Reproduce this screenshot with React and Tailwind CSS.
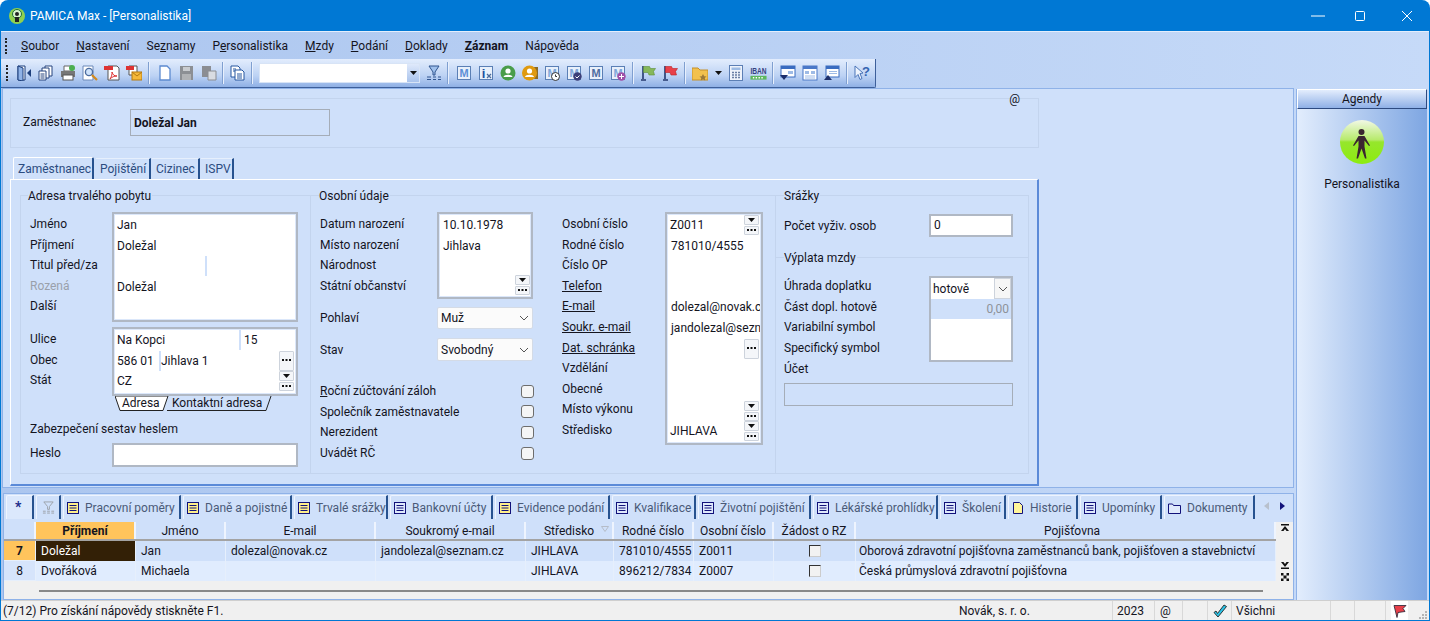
import React from "react";

const S = ({ children }) => <svg viewBox="0 0 16 16" className="w-4 h-4 shrink-0">{children}</svg>;
const Slot = ({ children }) => <div className="w-[22px] h-4 flex justify-center shrink-0">{children}</div>;
const Sep = ({ w = "w-[8px]" }) => <div className={`${w} h-[22px] flex justify-center shrink-0`}><div className="w-[2px] h-full bg-[#e8f0fd] border-l border-[#7f9fd0]" /></div>;

const M = ({ extra, tone = "#5b8fd6" }) => (
  <S>
    <rect x="1.5" y="1.5" width="13" height="13" fill="#e8f0fb" stroke="#5a7fb5" />
    <text x="8" y="12.2" textAnchor="middle" fontSize="11" fontWeight="700" fontFamily="Liberation Sans, sans-serif" fill={tone}>M</text>
    {extra}
  </S>
);

const icons = {
  door: <S><path d="M2 1h7v14H2z" fill="#fff" stroke="#1d3f7c" /><path d="M2 1l5 2v13l-5-1z" fill="#8fb2e6" stroke="#1d3f7c" /><path d="M15 4v8l-4-4z" fill="#1d3f7c" /></S>,
  copy: <S><path d="M7 1h7v10H7z" fill="#fff" stroke="#26457f" /><path d="M4 3h7v10H4z" fill="#fff" stroke="#26457f" /><path d="M1 6h7v9H1z" fill="#fff" stroke="#26457f" /><path d="M2.5 9h4M2.5 11h4M2.5 13h4" stroke="#26457f" /></S>,
  print: <S><path d="M4 1h8v5H4z" fill="#fff" stroke="#666" /><rect x="1" y="6" width="14" height="6" fill="#777" /><rect x="3" y="10" width="10" height="5" fill="#fff" stroke="#555" /><circle cx="12" cy="3" r="3" fill="#4caf50" /></S>,
  prev: <S><path d="M1 1h10v14H1z" fill="#fff" stroke="#6a88b8" /><circle cx="7" cy="7" r="3.6" fill="#cfe3fb" stroke="#4d6d9f" strokeWidth="1.4" /><path d="M10 10l5 5" stroke="#d48a1c" strokeWidth="2.2" /></S>,
  pdf: <S><path d="M4 1h9l2 2v12H4z" fill="#fff" stroke="#555" /><rect x="0" y="1" width="9" height="4" fill="#d33" /><path d="M6 14c2-3 2-5 2-7 1 3 2 4 5 4-3 0-5 1-7 3z" fill="none" stroke="#d33" /></S>,
  pdfm: <S><path d="M3 1h8v9H3z" fill="#fff" stroke="#555" /><rect x="0" y="1" width="8" height="4" fill="#d33" /><rect x="6" y="7" width="10" height="8" fill="#f5b83a" stroke="#b57a10" /><path d="M6 7l5 4 5-4" fill="none" stroke="#b57a10" /></S>,
  neu: <S><path d="M3 1h7l3 3v11H3z" fill="#fff" stroke="#5c8ad0" strokeWidth="1.3" /></S>,
  save: <S><path d="M1 1h13v14H1z" fill="#8c8f94" /><rect x="4" y="2" width="7" height="4" fill="#c9ccd0" /><rect x="3" y="9" width="9" height="6" fill="#b0b2b5" /></S>,
  copyg: <S><path d="M1 1h9v11H1z" fill="#8b8d92" /><path d="M7 6h8v9H7z" fill="#d9dce2" stroke="#8b8d92" /></S>,
  docs: <S><path d="M2 1h7l2 2v9H2z" fill="#fff" stroke="#26569f" /><path d="M6 5h7l2 2v8H6z" fill="#fff" stroke="#26569f" /><path d="M4 4h3M4 6h2M8 9h5M8 11h5M8 13h5" stroke="#26569f" /></S>,
  filter: <S><path d="M3 1h10L9 7v3H7V7z" fill="#9fc0ec" stroke="#30558f" /><path d="M1 12h4M7 12h3M12 12h3M1 14.5h4M7 14.5h3M12 14.5h3" stroke="#30558f" /></S>,
  info: <S><rect x="1.5" y="1.5" width="13" height="13" fill="#e8f0fb" stroke="#5a7fb5" /><text x="5.5" y="12.5" textAnchor="middle" fontSize="13" fontWeight="700" fontFamily="Liberation Sans, sans-serif" fill="#1d4f9f">i</text><path d="M9 9l4 4M13 9l-4 4" stroke="#4a6a9a" strokeWidth="1.3" /></S>,
  green: <S><circle cx="8" cy="8" r="7.5" fill="#4a9d4a" /><circle cx="8" cy="6" r="2.6" fill="#fff" /><path d="M3.5 12c.5-3 8.500-3 9 0z" fill="#fff" /></S>,
  orange: <S><rect x="10" y="2" width="6" height="12" fill="#8a6a28" /><circle cx="7.500" cy="8" r="7.500" fill="#e09a10" /><circle cx="7.500" cy="6" r="2.600" fill="#fff" /><path d="M3 12c.5-3 8.500-3 9 0z" fill="#fff" /></S>,
  mclock: <M tone="#7fa6d8" extra={<><circle cx="11.500" cy="11.500" r="4" fill="#fff" stroke="#333" /><path d="M11.500 9.500v2h1.500" stroke="#333" fill="none" /></>} />,
  mcheck: <M tone="#7fa6d8" extra={<><circle cx="11.500" cy="11.500" r="4.200" fill="#3c3f78" /><path d="M9.500 11.500l1.500 1.500 2.500-2.500" stroke="#fff" fill="none" /></>} />,
  mdark: <M tone="#4d6d9f" />,
  mplus: <M tone="#7fa6d8" extra={<><circle cx="11.500" cy="11.500" r="4.200" fill="#a04fa8" /><path d="M9 11.500h5M11.500 9v5" stroke="#fff" /></>} />,
  fg: <S><path d="M3 1v13M1 15h5" stroke="#24386f" strokeWidth="1.600" /><path d="M3.500 1.500h6l1 2h5l-2 3 1 3.500H9L8 7.500H3.500z" fill="#86b85a" stroke="#5d8f3a" strokeWidth=".6" /></S>,
  fr: <S><path d="M3 1v13M1 15h5" stroke="#24386f" strokeWidth="1.600" /><path d="M3.500 1.500h6l1 2h5l-2 3 1 3.500H9L8 7.500H3.500z" fill="#e8404a" stroke="#b22" strokeWidth=".6" /></S>,
  folder: <S><path d="M0 3h6l2 2h8v10H0z" fill="#f2c14e" stroke="#c4902a" /><path d="M11 9l1.200 2.200 2.300.3-1.700 1.600.4 2.400-2.200-1.200-2.200 1.200.4-2.400-1.700-1.600 2.300-.3z" fill="#9c7a3a" /></S>,
  calc: <S><rect x="1.500" y="0.500" width="13" height="15" fill="#eef3fb" stroke="#5c7fb5" /><rect x="3.500" y="2.500" width="9" height="2.500" fill="#9dbbe4" /><path d="M4 7.500h2M7 7.500h2M10 7.500h2M4 10h2M7 10h2M10 10h2M4 12.500h2M7 12.500h2M10 12.500h2" stroke="#6a7fa5" strokeWidth="1.300" /></S>,
  iban: <svg viewBox="0 0 18 16" className="w-[17px] h-4 shrink-0"><text transform="translate(.5 9.500) scale(1 1.400)" fontSize="7" fontWeight="700" fontFamily="Liberation Sans, sans-serif" fill="#35407f">IBAN</text><rect x="0.500" y="11" width="17" height="4" fill="#5cb85c" /><path d="M3 13h1.500M6 13h1.500M9 13h1.500M12 13h1.500" stroke="#fff" strokeWidth="1.500" /></svg>,
  w1: <S><rect x="1" y="1" width="14" height="11" fill="#fff" stroke="#3a6cc0" /><rect x="1" y="1" width="14" height="3" fill="#3a6cc0" /><rect x="8" y="6" width="5" height="3" fill="#9ebbe6" /><path d="M0 10h8l-4 5z" fill="#1d2f6b" /></S>,
  w2: <S><rect x="1" y="1" width="14" height="14" fill="#fff" stroke="#4a78c8" /><rect x="1" y="1" width="14" height="3" fill="#4a78c8" /><rect x="3" y="6" width="4" height="3" fill="#9ebbe6" /><rect x="9" y="6" width="4" height="3" fill="#9ebbe6" /><path d="M3 11h10M3 13h10" stroke="#9ebbe6" /></S>,
  w3: <S><rect x="2" y="1" width="13" height="11" fill="#fff" stroke="#3a6cc0" /><rect x="2" y="1" width="13" height="3" fill="#3a6cc0" /><path d="M5 6.500h8M5 8.500h8" stroke="#9ebbe6" /><path d="M0 15l4-5 4 5z" fill="#1d2f6b" /></S>,
  help: <S><path d="M1 1l8 7-3 .5 2 5-2 1-2-5-3 3z" fill="#eef4fd" stroke="#4a74b8" /><text x="12" y="11" textAnchor="middle" fontSize="13" fontWeight="700" fontFamily="Liberation Sans, sans-serif" fill="#3564b0">?</text></S>,
};

const Dots = () => <svg viewBox="0 0 9 3" className="w-[9px] h-[3px]"><path d="M0 0h2v2H0zM3.500 0h2v2h-2zM7 0h2v2H7z" fill="#111" /></svg>;
const Arrow = () => <svg viewBox="0 0 7 4" className="w-[7px] h-[4px]"><path d="M0 0h7L3.500 4z" fill="#111" /></svg>;
const TinyBtn = ({ children, h = "h-[10px]" }) => <div className={`w-[15px] ${h} bg-[#f4f6f9] border border-[#cdd3dc] rounded-[1px] flex items-center justify-center shrink-0`}>{children}</div>;
const Split = () => <div className="flex flex-col gap-px w-[15px] shrink-0"><TinyBtn><Arrow /></TinyBtn><TinyBtn h="h-[9px]"><Dots /></TinyBtn></div>;

const Group = ({ title, className, ml = "ml-[8px]", children }) => (
  <div className={`border border-[#c3d4ee] h-[279px] shrink-0 ${className}`}>
    <div className={`-mt-[9px] ${ml} w-fit h-[18px] leading-[18px] bg-[#cfe0fa] pr-px`}>{title}</div>
    {children}
  </div>
);

const Row = ({ children, className = "" }) => <div className={`h-[20.6px] leading-[20.6px] flex items-center whitespace-nowrap ${className}`}>{children}</div>;
const Labels = ({ items, w }) => <div className={`${w} shrink-0 pt-[2px]`}>{items.map((l, i) => <Row key={i} className={l.cls || ""}>{l.t || l}</Row>)}</div>;
const Box = ({ className = "", children }) => <div className={`border-2 border-[#b0b8c4] p-px bg-[#dbe7fa] shrink-0 ${className}`}><div className="bg-white h-full overflow-hidden">{children}</div></div>;

const U = ({ children }) => <span className="underline">{children}</span>;

function Chevron({ c = "#555" }) {
  return <svg viewBox="0 0 10 6" className="w-[10px] h-[6px]"><path d="M1 1l4 4 4-4" fill="none" stroke={c} /></svg>;
}

const Select = ({ v, h }) => (
  <div className={`w-[96px] ${h} bg-[#fbfbfb] border border-[#d4dbe6] rounded-[2px] flex items-center justify-between pl-[3px] pr-[3px]`}>
    {v}<Chevron />
  </div>
);

const ChkRow = ({ t }) => (
  <Row className="justify-between">
    <span>{t}</span>
    <span className="w-[13px] h-[13px] bg-[#f4f5f6] border border-[#6d6d6d] rounded-[3px]" />
  </Row>
);

const colW = ["w-[32px]", "w-[100px]", "w-[90px]", "w-[150px]", "w-[150px]", "w-[88px]", "w-[80px]", "w-[80px]", "w-[82px]", "w-[420px]"];
const heads = ["", "Příjmení", "Jméno", "E-mail", "Soukromý e-mail", "Středisko", "Rodné číslo", "Osobní číslo", "Žádost o RZ", "Pojišťovna"];
const rows = [
  ["7", "Doležal", "Jan", "dolezal@novak.cz", "jandolezal@seznam.cz", "JIHLAVA", "781010/4555", "Z0011", "", "Oborová zdravotní pojišťovna zaměstnanců bank, pojišťoven a stavebnictví"],
  ["8", "Dvořáková", "Michaela", "", "", "JIHLAVA", "896212/7834", "Z0007", "", "Česká průmyslová zdravotní pojišťovna"],
];

const ListIc = ({ y }) => <svg viewBox="0 0 12 12" className="w-3 h-3 shrink-0"><rect x=".5" y=".5" width="11" height="11" fill={y ? "#ffef8a" : "#dfe9fb"} stroke="#12127a" /><path d="M2.500 3.500h7M2.500 6h7M2.500 8.500h7" stroke="#12127a" /></svg>;
const NoteIc = () => <svg viewBox="0 0 12 12" className="w-3 h-3 shrink-0"><path d="M1.500.5h6l3 3v8h-9z" fill="#fff59a" stroke="#12127a" /></svg>;
const FolderIc = () => <svg viewBox="0 0 13 12" className="w-[13px] h-3 shrink-0"><path d="M.5 2h4l1 1.500h7v8H.5z" fill="#dfe9fb" stroke="#12127a" /></svg>;

const btabs = [
  ["Pracovní poměry", <ListIc y />, "w-[118px]"],
  ["Daně a pojistné", <ListIc y />, "w-[109px]"],
  ["Trvalé srážky", <ListIc y />, "w-[94px]"],
  ["Bankovní účty", <ListIc />, "w-[103px]"],
  ["Evidence podání", <ListIc y />, "w-[115px]"],
  ["Kvalifikace", <ListIc />, "w-[84px]"],
  ["Životní pojištění", <ListIc />, "w-[113px]"],
  ["Lékářské prohlídky", <ListIc />, "w-[125px]"],
  ["Školení", <ListIc />, "w-[66px]"],
  ["Historie", <NoteIc />, "w-[70px]"],
  ["Upomínky", <ListIc />, "w-[82px]"],
  ["Dokumenty", <FolderIc />, "w-[91px]"],
];

const BTab = ({ children, w, className = "" }) => (
  <div className={`${w} h-[24px] shrink-0 flex items-center gap-[6px] pl-[3px] border-t border-l border-[#eef4fe] border-r-2 border-r-[#27528f] rounded-tl-[2px] text-[#4a5a78] whitespace-nowrap overflow-hidden ${className}`}>{children}</div>
);

const Cell = ({ w, children, className = "" }) => <div className={`${w} h-full shrink-0 flex items-center overflow-hidden whitespace-nowrap border-r border-[#e6effc] ${className}`}>{children}</div>;

const tb = ["door","copy","print","prev","pdf","pdfm"];

export default function App() {
  return (
    <div className="w-[1430px] h-[621px] overflow-hidden flex flex-col bg-[#0078d4] rounded-t-[8px] font-['Roboto',sans-serif] text-[12px] text-[#14141e]">
      {/* title */}
      <div className="h-[31px] shrink-0 flex items-center text-white">
        <svg viewBox="0 0 16 16" className="w-4 h-4 ml-[9px]"><circle cx="8" cy="8" r="8" fill="#8fd14f" /><circle cx="8" cy="6" r="4.500" fill="#d9f5d0" stroke="#1f6f3a" /><circle cx="8" cy="6" r="2" fill="#222" /><rect x="6" y="9" width="4" height="5" fill="#222" /></svg>
        <span className="ml-[5px]">PAMICA Max - [Personalistika]</span>
        <div className="ml-auto flex items-center">
          <svg viewBox="0 0 14 12" className="w-[14px] h-[12px] mr-[29px]"><path d="M0 6h14" stroke="#fff" /></svg>
          <svg viewBox="0 0 12 12" className="w-[12px] h-[12px] mr-[35px]"><rect x="1.500" y="1.500" width="9" height="9" rx="1" fill="none" stroke="#fff" /></svg>
          <svg viewBox="0 0 12 12" className="w-[12px] h-[12px] mr-[17px]"><path d="M1 1l10 10M11 1L1 11" stroke="#fff" /></svg>
        </div>
      </div>
      {/* window body */}
      <div className="flex-1 mx-px mb-px flex flex-col bg-[linear-gradient(90deg,#acc6ef,#c6daf8)] border-t border-[#e4eefc] min-h-0">
        {/* menu */}
        <div className="h-[27px] shrink-0 flex items-center">
          <div className="ml-[4px] mr-[14px] w-[2px] h-[16px] border-l-2 border-dotted border-[#222]" />
          <div className="flex gap-[17px]">
            <span><U>S</U>oubor</span><span><U>N</U>astavení</span><span>Se<U>z</U>namy</span><span>P<U>e</U>rsonalistika</span><span><U>M</U>zdy</span><span><U>P</U>odání</span><span><U>D</U>oklady</span><span className="font-bold"><U>Z</U>áznam</span><span>Náp<U>o</U>věda</span>
          </div>
        </div>
        {/* toolbar */}
        <div className="h-[29px] w-[875px] shrink-0 flex items-center bg-[linear-gradient(180deg,#e3edfd,#bcd2f4_60%,#8fb0e5)] border-b border-r border-[#3d5f9a] rounded-br-[2px] pl-[2px]">
          <div className="ml-[3px] mr-[5px] w-[2px] h-[16px] border-l-2 border-dotted border-[#222]" />
          {tb.map(k => <Slot key={k}>{icons[k]}</Slot>)}
          <Sep />
          <div className="w-px" />
          <Slot>{icons.neu}</Slot><Slot>{icons.save}</Slot><Slot>{icons.copyg}</Slot>
          <Sep w="w-[6px]" />
          <Slot>{icons.docs}</Slot>
          <Sep w="w-[7px]" />
          <div className="ml-[4px] w-[161px] h-[20px] bg-white border border-[#d8e4f6] flex justify-end shrink-0">
            <div className="w-[12px] h-full bg-[linear-gradient(180deg,#dfe9fb,#a9c3ec)] flex items-center justify-center"><Arrow /></div>
          </div>
          <div className="w-[3px]" />
          <Slot>{icons.filter}</Slot>
          <Sep w="w-[6px]" />
          <div className="w-[2px]" />
          <Slot><M /></Slot><Slot>{icons.info}</Slot><Slot>{icons.green}</Slot><Slot>{icons.orange}</Slot><Slot>{icons.mclock}</Slot><Slot>{icons.mcheck}</Slot><Slot>{icons.mdark}</Slot><Slot>{icons.mplus}</Slot>
          <Sep />
          <Slot>{icons.fg}</Slot><Slot>{icons.fr}</Slot>
          <Sep />
          <Slot>{icons.folder}</Slot>
          <div className="w-[14px] flex justify-center"><Arrow /></div>
          <Slot>{icons.calc}</Slot><Slot>{icons.iban}</Slot>
          <Sep />
          <Slot>{icons.w1}</Slot><Slot>{icons.w2}</Slot><Slot>{icons.w3}</Slot>
          <Sep />
          <Slot>{icons.help}</Slot>
        </div>
        {/* workspace */}
        <div className="flex-1 min-h-0 flex pl-px">
          <div className="w-[1292px] shrink-0 flex flex-col">
            {/* upper */}
            <div className="h-[400px] shrink-0 bg-[#cfe0fa] border border-[#8fb2e8] pl-[7px] pr-[254px] pt-[9px]">
              <div className="relative h-[50px] border border-[#c3d4ee] flex items-start pl-[12px] pt-[10px]">
                <span className="w-[107px] leading-[27px]">Zaměstnanec</span>
                <div className="w-[200px] h-[27px] border border-[#a5adb8] flex items-center pl-[3px] font-bold">Doležal Jan</div>
                <span className="absolute right-[18px] -top-[9px]">@</span>
              </div>
              {/* tabs */}
              <div className="h-[22px] mt-[9px] flex ml-[3px] text-[#2c4c80] whitespace-nowrap">
                <div className="w-[81px] h-[22px] bg-[#cfe0fa] border-t border-l border-white border-r-2 border-r-[#27528f] rounded-t-[2px] pl-[4px] leading-[22px]">Zaměstnanec</div>
                <div className="w-[55px] ml-[2px] mt-[1px] border-t border-[#e6effc] border-r-2 border-r-[#27528f] pl-[4px] leading-[21px]">Pojištění</div>
                <div className="w-[48px] ml-px mt-[1px] border-t border-[#e6effc] border-r-2 border-r-[#27528f] pl-[4px] leading-[21px]">Cizinec</div>
                <div className="w-[33px] ml-px mt-[1px] border-t border-[#e6effc] border-r-2 border-r-[#27528f] pl-[4px] leading-[21px]">ISPV</div>
              </div>
              {/* panel */}
              <div className="h-[307px] border-t border-l border-white border-r-2 border-b-2 border-r-[#5b8ad8] border-b-[#5b8ad8] flex pl-[9px] pt-[15px]">
                {/* col 1 */}
                <Group title="Adresa trvalého pobytu" ml="ml-[7px]" className="w-[291px]">
                  <div className="pl-[9px] mt-[7px] w-[277px]">
                    <div className="flex">
                      <Labels w="w-[82px]" items={["Jméno", "Příjmení", "Titul před/za", { t: "Rozená", cls: "text-[#9aa0aa]" }, "Další"]} />
                      <Box className="w-[186px] h-[110px]">
                        <div className="pl-[2px]">
                          <Row>Jan</Row>
                          <Row>Doležal</Row>
                          <Row><span className="ml-[88px] w-[2px] h-[20px] bg-[#cfe0fa]" /></Row>
                          <Row>Doležal</Row>
                        </div>
                      </Box>
                    </div>
                    <div className="flex mt-[5px]">
                      <Labels w="w-[82px]" items={["Ulice", "Obec", "Stát"]} />
                      <Box className="w-[186px] h-[69px]">
                        <div className="pl-[2px]">
                          <Row><span className="w-[122px]">Na Kopci</span><span className="w-[2px] h-[20px] bg-[#cfe0fa] mr-[3px]" />15</Row>
                          <Row><span className="w-[42px]">586 01</span><span className="w-[2px] h-[20px] bg-[#cfe0fa]" />Jihlava 1<span className="ml-auto mr-[1px]"><TinyBtn h="h-[20px]"><Dots /></TinyBtn></span></Row>
                          <Row>CZ<span className="ml-auto mr-[1px]"><Split /></span></Row>
                        </div>
                      </Box>
                    </div>
                    <div className="relative h-[15px] ml-[85px] flex">
                      <svg viewBox="0 0 160 15" className="absolute inset-0 w-[160px] h-[15px]"><path d="M0 0l5 14.500H48L53 0z" fill="#fff" stroke="#222" /><path d="M52 14.500H151L156 0" fill="none" stroke="#222" /></svg>
                      <span className="relative ml-[7px] w-[50px] leading-[15px]">Adresa</span>
                      <span className="relative leading-[15px] whitespace-nowrap">Kontaktní adresa</span>
                    </div>
                    <div className="h-[18px] leading-[18px] mt-[9px]">Zabezpečení sestav heslem</div>
                    <div className="flex items-center mt-[5px]">
                      <span className="w-[82px] -mt-[4px]">Heslo</span>
                      <div className="w-[186px] h-[24px] bg-white border-2 border-[#b0b8c4]" />
                    </div>
                  </div>
                </Group>
                {/* col 2 */}
                <Group title="Osobní údaje" className="w-[466px] -ml-px">
                  <div className="flex mt-[7px] pl-[9px]">
                    <div className="w-[214px] shrink-0">
                      <div className="flex">
                        <Labels w="w-[117px]" items={["Datum narození", "Místo narození", "Národnost", "Státní občanství"]} />
                        <Box className="w-[96px] h-[87px]">
                          <div className="pl-[3px] h-full flex flex-col">
                            <Row>10.10.1978</Row>
                            <Row>Jihlava</Row>
                            <div className="mt-auto flex justify-end mb-px"><Split /></div>
                          </div>
                        </Box>
                      </div>
                      <div className="flex items-center mt-[8px]"><span className="w-[117px]">Pohlaví</span><Select v="Muž" h="h-[22px]" /></div>
                      <div className="flex items-center mt-[9px]"><span className="w-[117px]">Stav</span><Select v="Svobodný" h="h-[23px]" /></div>
                      <div className="mt-[20px]">
                        <ChkRow t={<><U>R</U>oční zúčtování záloh</>} />
                        <ChkRow t="Společník zaměstnavatele" />
                        <ChkRow t="Nerezident" />
                        <ChkRow t="Uvádět RČ" />
                      </div>
                    </div>
                    <div className="flex ml-[28px]">
                      <Labels w="w-[103px]" items={["Osobní číslo", "Rodné číslo", "Číslo OP", { t: <U>Telefon</U> }, { t: <U>E-mail</U> }, { t: <U>Soukr. e-mail</U> }, { t: <U>Dat. schránka</U> }, "Vzdělání", "Obecné", "Místo výkonu", "Středisko"]} />
                      <Box className="w-[98px] h-[233px]">
                        <div className="pl-[2px] pr-[1px]">
                          <Row className="justify-between">Z0011<Split /></Row>
                          <Row className="pl-[1px]">781010/4555</Row>
                          <Row /><Row />
                          <Row className="pl-[1px]">dolezal@novak.cz</Row>
                          <Row className="pl-[1px]">jandolezal@seznam.cz</Row>
                          <Row className="justify-end"><TinyBtn h="h-[20px]"><Dots /></TinyBtn></Row>
                          <Row /><Row />
                          <Row className="justify-end"><Split /></Row>
                          <Row className="justify-between">JIHLAVA<Split /></Row>
                        </div>
                      </Box>
                    </div>
                  </div>
                </Group>
                {/* col 3 */}
                <Group title="Srážky" className="w-[254px] -ml-px">
                  <div className="flex items-center mt-[9px] pl-[8px]">
                    <span className="w-[145px]">Počet vyživ. osob</span>
                    <div className="w-[84px] h-[23px] bg-white border-2 border-[#b0b8c4] pl-[3px] leading-[19px]">0</div>
                  </div>
                  <div className="mt-[20px] border-t border-[#c3d4ee]">
                    <div className="-mt-[9px] ml-[8px] w-fit h-[18px] leading-[18px] bg-[#cfe0fa] pr-px">Výplata mzdy</div>
                  </div>
                  <div className="flex mt-[9px] pl-[8px]">
                    <div className="w-[145px] shrink-0">
                      <Row>Úhrada doplatku</Row><Row>Část dopl. hotově</Row><Row>Variabilní symbol</Row><Row>Specifický symbol</Row>
                    </div>
                    <div className="w-[84px] h-[86px] border-2 border-[#b0b8c4] bg-white shrink-0">
                      <div className="h-[21px] flex items-center justify-between pl-[2px]">hotově<span className="w-[17px] h-[21px] bg-[#f6f6f6] border border-[#cdd3dc] flex items-center justify-center"><Chevron /></span></div>
                      <div className="h-[20px] bg-[#cfe0fa] text-right text-[#8d9299] pr-[2px] leading-[20px]">0,00</div>
                    </div>
                  </div>
                  <div className="h-[14px] leading-[14px] pl-[8px]">Účet</div>
                  <div className="ml-[8px] mt-[7px] w-[229px] h-[23px] border border-[#a5adb8]" />
                </Group>
              </div>
            </div>
            {/* lower */}
            <div className="h-[107px] shrink-0 mt-[5px] ml-px bg-[#f0f0f0] border border-[#8fb2e8] flex flex-col">
              <div className="h-[28px] shrink-0 bg-[#cfe0fa] pt-[1px] pl-[2px] flex gap-[2px] items-start">
                <BTab w="w-[28px]" className="bg-[#dbe8fc] !pl-[8px] !text-[#1a2a8a] font-bold text-[14px]">*</BTab>
                <BTab w="w-[25px]"><svg viewBox="0 0 14 14" className="w-[13px] h-[13px] ml-[2px]"><path d="M2 1h10L8 6v3H6V6z" fill="none" stroke="#9aa0a8" /><path d="M1 11h3M5.500 11h3M10 11h3M1 13h3M5.500 13h3M10 13h3" stroke="#9aa0a8" /></svg></BTab>
                {btabs.map(([t, ic, w]) => <BTab key={t} w={w}>{ic}<span>{t}</span></BTab>)}
                <div className="flex items-center gap-[10px] ml-[7px] h-[22px]">
                  <svg viewBox="0 0 5 8" className="w-[5px] h-[8px]"><path d="M5 0v8L0 4z" fill="#b8c0cc" /></svg>
                  <svg viewBox="0 0 5 8" className="w-[5px] h-[8px] ml-[1px]"><path d="M0 0v8l5-4z" fill="#12127a" /></svg>
                </div>
              </div>
              <div className="flex-1 flex min-h-0">
                <div className="w-[1272px] shrink-0">
                  <div className="h-[19px] flex bg-[#cfe0fa] border-b-2 border-[#a3a3a3]">
                    {heads.map((h, i) => (
                      <div key={i} className={`${colW[i]} shrink-0 relative text-center leading-[18px] border-r-2 border-[#eef4fe] ${i === 1 ? "bg-[#ffc45c] font-bold" : ""} ${i === 9 ? "pl-[14px]" : ""}`}>
                        {h}
                        {i === 5 && <svg viewBox="0 0 8 6" className="absolute right-[3px] top-[4px] w-[8px] h-[6px]"><path d="M.5.500h7L4 5.500z" fill="none" stroke="#b5bcc8" /></svg>}
                      </div>
                    ))}
                  </div>
                  {rows.map((r, ri) => (
                    <div key={ri} className={`h-[20px] flex ${ri === 0 ? "bg-[#cfe0fa]" : "bg-[#e0ecfe]"}`}>
                      <Cell w={colW[0]} className={`justify-center border-b border-[#b5b5b5] ${ri === 0 ? "bg-[#ffc45c] font-bold" : "bg-[#d6e4fb]"}`}>{r[0]}</Cell>
                      <Cell w={colW[1]} className={`pl-[5px] ${ri === 0 ? "bg-[#332006] text-white" : ""}`}>{r[1]}</Cell>
                      <Cell w={colW[2]} className="pl-[5px]">{r[2]}</Cell>
                      <Cell w={colW[3]} className="pl-[5px]">{r[3]}</Cell>
                      <Cell w={colW[4]} className="pl-[5px]">{r[4]}</Cell>
                      <Cell w={colW[5]} className="pl-[5px]">{r[5]}</Cell>
                      <Cell w={colW[6]} className="pl-[5px]">{r[6]}</Cell>
                      <Cell w={colW[7]} className="pl-[5px]">{r[7]}</Cell>
                      <Cell w={colW[8]} className="justify-center"><span className="w-[12px] h-[12px] bg-[#f2f2f2] border border-t-[#333] border-l-[#333] border-r-[#ccc] border-b-[#ccc]" /></Cell>
                      <Cell w={colW[9]} className="pl-[3px]">{r[9]}</Cell>
                    </div>
                  ))}
                  <div className="ml-[35px] mt-[9px] w-[1224px] h-[2px] bg-[#888]" />
                </div>
                <div className="w-[17px] shrink-0 flex flex-col items-center pt-[1px]">
                  <svg viewBox="0 0 8 8" className="w-2 h-2 mt-[1px]"><path d="M0 0h8v1.500H0zM4 2l4 5H5.500L4 5 2.500 7H0z" fill="#111" /></svg>
                  <svg viewBox="0 0 8 8" className="w-2 h-2 mt-[29px]"><path d="M0 8h8V6.500H0zM4 6l4-5H5.500L4 3 2.500 1H0z" fill="#111" /></svg>
                  <svg viewBox="0 0 8 8" className="w-2 h-2 mt-[4px]"><path d="M0 0h2.500v2.500H0zM5.500 0H8v2.500H5.500zM0 5.500h2.500V8H0zM5.500 5.500H8V8H5.500zM2.500 2.500h3v3h-3z" fill="#111" /></svg>
                </div>
              </div>
            </div>
          </div>
          {/* right */}
          <div className="w-[131px] shrink-0 ml-[2px] mt-[1px] border-l border-[#8fb2e8] h-[511px] bg-[linear-gradient(90deg,#e2edfd,#7ea6e2)] flex flex-col items-center">
            <div className="w-full h-[20px] bg-[linear-gradient(180deg,#e3edfd,#8fb0e6)] border-t border-l border-white border-r border-b border-r-[#2d4a80] border-b-[#2d4a80] text-center leading-[19px]">Agendy</div>
            <svg viewBox="0 0 44 44" className="w-[44px] h-[44px] mt-[11px]">
              <defs><linearGradient id="ag" x1="0" y1="0" x2="0" y2="1"><stop offset="0" stopColor="#f2f8e6" /><stop offset=".45" stopColor="#b7ea6c" /><stop offset=".5" stopColor="#96e62c" /><stop offset="1" stopColor="#8cec10" /></linearGradient></defs>
              <circle cx="22" cy="22" r="22" fill="url(#ag)" />
              <circle cx="21.500" cy="12" r="3" fill="#3a2530" />
              <path d="M18.500 16h6l5.500 9.500-1 .5-4.500-5.500v6l2 12H25l-3.500-10L18 38.500h-1.500l2-12v-6L14 26l-1-.5z" fill="#3a2530" />
            </svg>
            <div className="mt-[11px]">Personalistika</div>
          </div>
        </div>
        {/* status */}
        <div className="h-[20px] shrink-0 bg-[#f0f0f0] border-t border-[#cfcfcf] flex items-center whitespace-nowrap">
          <div className="w-[958px] pl-[2px] shrink-0">(7/12) Pro získání nápovědy stiskněte F1.</div>
          <div className="w-[154px] h-full shrink-0 flex items-center border-r border-[#d8d8d8]">Novák, s. r. o.</div>
          <div className="w-[42px] h-full shrink-0 flex items-center pl-[4px] border-r border-[#d8d8d8]">2023</div>
          <div className="w-[28px] h-full shrink-0 flex items-center pl-[5px] border-r border-[#d8d8d8]">@</div>
          <div className="w-[25px] h-full shrink-0 border-r border-[#d8d8d8]" />
          <div className="w-[24px] h-full shrink-0 flex items-center justify-center border-r border-[#d8d8d8]">
            <svg viewBox="0 0 14 14" className="w-[14px] h-[14px]"><path d="M1 8.500l2-1.500 1.500 2.500L11 1l2.500 1.500L5 13z" fill="#2cc4e8" stroke="#222" strokeWidth=".9" /></svg>
          </div>
          <div className="w-[99px] h-full shrink-0 flex items-center pl-[4px] border-r border-[#d8d8d8]">Všichni</div>
          <div className="w-[24px] h-full shrink-0 border-r border-[#d8d8d8]" />
          <div className="w-[31px] h-full shrink-0 border-r border-[#d8d8d8]" />
          <div className="w-[17px] h-full ml-[5px] shrink-0 flex items-center justify-center bg-white">
            <svg viewBox="0 0 14 14" className="w-[14px] h-[14px]"><path d="M4 13.500L1 1.500h12l-3 3 2 3-7 1z" fill="#e8404a" stroke="#223" strokeWidth=".8" /></svg>
          </div>
          <svg viewBox="0 0 10 10" className="w-[10px] h-[10px] ml-auto mr-[1px] mt-auto"><path d="M7 1h2v2H7zM4 4h2v2H4zM7 4h2v2H7zM1 7h2v2H1zM4 7h2v2H4zM7 7h2v2H7z" fill="#b4b4b4" /></svg>
        </div>
      </div>
    </div>
  );
}
